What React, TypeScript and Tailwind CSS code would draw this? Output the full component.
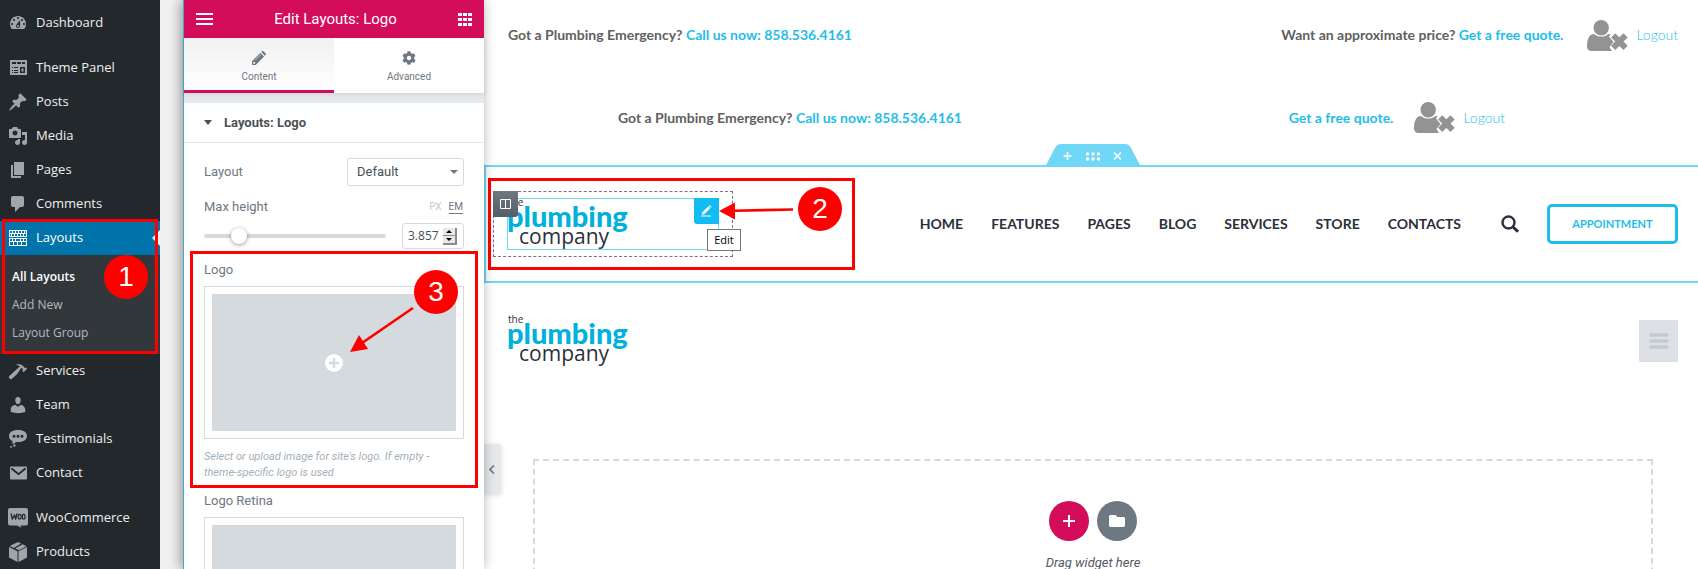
import type { ReactNode } from "react";
import { FaCog, FaFolder } from "react-icons/fa";

const dash = {
  dashboard:
    "M3.76 16h12.48c1.1-1.37 1.76-3.11 1.76-5 0-4.42-3.58-8-8-8s-8 3.58-8 8c0 1.89.66 3.63 1.76 5zM10 4c.55 0 1 .45 1 1s-.45 1-1 1-1-.45-1-1 .45-1 1-1zM6 6c.55 0 1 .45 1 1s-.45 1-1 1-1-.45-1-1 .45-1 1-1zm8 0c.55 0 1 .45 1 1s-.45 1-1 1-1-.45-1-1 .45-1 1-1zm-5.37 5.55L12 7v6c0 1.1-.9 2-2 2s-2-.9-2-2c0-.57.24-1.08.63-1.45zM4 10c.55 0 1 .45 1 1s-.45 1-1 1-1-.45-1-1 .45-1 1-1zm12 0c.55 0 1 .45 1 1s-.45 1-1 1-1-.45-1-1 .45-1 1-1zm-5 3c0-.55-.45-1-1-1s-1 .45-1 1 .45 1 1 1 1-.45 1-1z",
  theme: "M2 2h17v15H2zM4 4v2h4V4zM9 4v2h4V4zM14 4v2h3V4zM4 9v1h1V9zM6 9v1h4V9zM4 12v1h1v-1zM6 12v1h4v-1zM4 14v1h1v-1zM6 14v1h4v-1zM12 9v6h5V9zM13.500 10.500h2v3h-2z",
  posts:
    "M10.44 3.02l1.82-1.82 6.36 6.35-1.83 1.82c-1.05-.68-2.48-.57-3.41.36l-.75.75c-.92.93-1.04 2.35-.35 3.41l-1.83 1.82-2.41-2.41-2.8 2.79c-.42.42-3.38 2.71-3.8 2.29s1.86-3.39 2.28-3.81l2.79-2.79L4.1 9.36l1.83-1.82c1.05.69 2.48.57 3.4-.36l.75-.75c.93-.92 1.05-2.35.36-3.41z",
  media:
    "M13 11V4c0-.55-.45-1-1-1h-1.67L9 1H5L3.67 3H2c-.55 0-1 .45-1 1v7c0 .55.45 1 1 1h10c.55 0 1-.45 1-1zM7 4.5c1.38 0 2.5 1.12 2.5 2.5S8.38 9.5 7 9.5 4.5 8.38 4.5 7 5.62 4.5 7 4.5zM14 6h5v10.5c0 1.38-1.12 2.5-2.5 2.5S14 17.88 14 16.5s1.12-2.5 2.5-2.5c.17 0 .34.02.5.05V9h-3V6zm-4 8.05V13h2v3.5c0 1.38-1.12 2.5-2.5 2.5S7 17.88 7 16.5 8.12 14 9.5 14c.17 0 .34.02.5.05z",
  pages: "M6 15V2h10v13H6zm-1 1h8v2H3V5h2v11z",
  comments:
    "M5 2h9c1.1 0 2 .9 2 2v7c0 1.1-.9 2-2 2h-2l-5 5v-5H5c-1.1 0-2-.9-2-2V4c0-1.1.9-2 2-2z",
  layouts:
    "M1 2h18v7H1zM2 3v2h16V3zM2 6v2h16V6zM1 10h18v8H1zM2 11v2h16v-2zM2 14v3h16v-3zM4 3h1v2H4zM7 3h1v2H7zM10 3h1v2h-1zM13 3h1v2h-1zM16 3h1v2h-1zM3 6h1v2H3zM6 6h1v2H6zM9 6h1v2H9zM12 6h1v2h-1zM15 6h1v2h-1zM4 11h1v2H4zM7 11h1v2H7zM12 11h1v2h-1zM15 11h1v2h-1zM5 14h1v3H5zM9 14h1v3H9zM13 14h1v3h-1z",
  services:
    "M17.7 6.32l1.41 1.42-3.47 3.41-1.42-1.42.84-.82c-.32-.76-.81-1.57-1.51-2.31l-4.61 6.59-5.26 4.7c-.39.39-1.02.39-1.42 0l-1.2-1.21c-.39-.39-.39-1.02 0-1.41l10.97-9.92c-1.37-.86-3.21-1.46-5.67-1.48 2.7-.82 4.95-.93 6.58-.3 1.7.66 2.82 2.2 3.91 3.58z",
  team: "M10 9.25c-2.270 0-2.730-3.440-2.730-3.440C7 4.020 7.820 2 9.970 2c2.160 0 2.980 2.020 2.710 3.810 0 0-.41 3.440-2.680 3.440zm0 2.570L12.720 10c2.390 0 4.520 2.330 4.520 4.530v2.490s-3.650 1.130-7.240 1.130c-3.650 0-7.240-1.130-7.240-1.130v-2.490c0-2.250 1.940-4.480 4.470-4.480z",
  testimonials:
    "M10 1h.5c5 0 8.500 2.200 8.500 6s-3.500 6-8.500 6H9.500c-.6 0-1.100 0-1.600-.1C7 14.300 5.300 15 4 14.600c.6-.8.700-1.500.5-2.400C2.300 11.200 1 9.300 1 7c0-3.800 3.500-6 9-6zM6 5.700a1.500 1.500 0 100 3 1.500 1.500 0 000-3zM10 5.700a1.500 1.500 0 100 3 1.500 1.500 0 000-3zM14 5.700a1.500 1.500 0 100 3 1.500 1.500 0 000-3zM5.800 15.400a1.200 1.200 0 110 2.200 1.200 1.200 0 010-2.200zM3 17a.9.900 0 110 1.800.9.900 0 010-1.800z",
  contact: "M3 3.500h15a1 1 0 011 1v11a1 1 0 01-1 1H3a1 1 0 01-1-1v-11a1 1 0 011-1zM3.200 5v1.500l7.300 5.700 7.300-5.700V5h-1.300l-6 4.900L4.500 5z",
  products:
    "M10 0l3.200 1.600-7.500 4.300-3.900-2zM14.600 2.300L18.500 4.200 11 8.300 7.200 6.600zM1 5l8.500 4.200V20L1 15.500zM19 5v10.500L10.500 20V9.200z",
};

function Glyph({ d }: { d: string }) {
  return (
    <svg viewBox="0 0 20 20" className="size-5 shrink-0" fill="currentColor" fillRule="evenodd" aria-hidden="true">
      <path d={d} />
    </svg>
  );
}

function WooGlyph() {
  return (
    <svg viewBox="0 0 20 20" className="size-5 shrink-0 overflow-visible" aria-hidden="true">
      <path d="M2 0h16a2 2 0 012 2v13.500a2 2 0 01-2 2h-5.500l.7 2.200-4-2.200H2a2 2 0 01-2-2V2a2 2 0 012-2z" fill="#a0a5aa" />
      <path
        d="M3.200 6l1.100 5.200L6.500 7l1.200 4.200L9 6"
        fill="none"
        stroke="#23282d"
        strokeWidth="1.300"
        strokeLinejoin="round"
        strokeLinecap="round"
      />
      <ellipse cx="11.700" cy="8.700" rx="1.500" ry="2.300" fill="none" stroke="#23282d" strokeWidth="1.200" />
      <ellipse cx="15.700" cy="8.700" rx="1.400" ry="2.300" fill="none" stroke="#23282d" strokeWidth="1.200" />
    </svg>
  );
}

function MenuItem({ label, icon }: { label: string; icon: ReactNode }) {
  return (
    <li>
      <a href="#" className="flex h-[34px] items-center gap-2 pl-2 text-[13px] text-[#eeeeee]">
        <span className="text-[#a0a5aa]">{icon}</span>
        {label}
      </a>
    </li>
  );
}

function Step({ n, className }: { n: number; className: string }) {
  return (
    <span
      className={`absolute z-20 flex size-11 items-center justify-center rounded-full bg-[#ff0000] font-['Liberation_Sans',sans-serif] text-[28px] leading-none text-white ${className}`}
    >
      {n}
    </span>
  );
}

function Sidebar() {
  return (
    <nav className="relative z-10 w-40 shrink-0 bg-[#23282d] pt-[6px] font-['Open_Sans',sans-serif]">
      <ul>
        <MenuItem label="Dashboard" icon={<Glyph d={dash.dashboard} />} />
      </ul>
      <ul className="mt-[11px]">
        <MenuItem label="Theme Panel" icon={<Glyph d={dash.theme} />} />
        <MenuItem label="Posts" icon={<Glyph d={dash.posts} />} />
        <MenuItem label="Media" icon={<Glyph d={dash.media} />} />
        <MenuItem label="Pages" icon={<Glyph d={dash.pages} />} />
        <MenuItem label="Comments" icon={<Glyph d={dash.comments} />} />
        <li className="relative">
          <a href="#" className="relative flex h-[34px] items-center gap-2 bg-[#0073aa] pl-2 text-[13px] text-white">
            <Glyph d={dash.layouts} />
            Layouts
            <span className="absolute top-[9px] right-0 border-y-8 border-r-8 border-y-transparent border-r-[#f1f1f1]" />
          </a>
          <ul className="bg-[#32373c] pt-2 pb-[7px] text-xs text-[#b4b9be]">
            <li>
              <a href="#" className="flex h-7 items-center pl-3 font-semibold text-white">
                All Layouts
              </a>
            </li>
            <li>
              <a href="#" className="flex h-7 items-center pl-3">
                Add New
              </a>
            </li>
            <li>
              <a href="#" className="flex h-7 items-center pl-3">
                Layout Group
              </a>
            </li>
          </ul>
          <span className="absolute -top-[2px] right-[2px] bottom-0 left-[2px] border-3 border-[#ff0000]" />
          <Step n={1} className="top-[34px] right-3" />
        </li>
        <MenuItem label="Services" icon={<Glyph d={dash.services} />} />
        <MenuItem label="Team" icon={<Glyph d={dash.team} />} />
        <MenuItem label="Testimonials" icon={<Glyph d={dash.testimonials} />} />
        <MenuItem label="Contact" icon={<Glyph d={dash.contact} />} />
      </ul>
      <ul className="mt-[11px]">
        <MenuItem label="WooCommerce" icon={<WooGlyph />} />
        <MenuItem label="Products" icon={<Glyph d={dash.products} />} />
      </ul>
    </nav>
  );
}

function MediaPicker({ label }: { label: string }) {
  return (
    <button
      type="button"
      aria-label={label}
      className="flex h-[153px] w-full border border-[#d5dadf] bg-white p-[7px]"
    >
      <span className="flex flex-1 items-center justify-center self-stretch bg-[#d5dadf]">
        <svg viewBox="0 0 18 18" className="size-[18px]" aria-hidden="true">
          <circle cx="9" cy="9" r="9" fill="#fff" />
          <path d="M9 4v10M4 9h10" stroke="#d5dadf" strokeWidth="2.400" />
        </svg>
      </span>
    </button>
  );
}

function Panel() {
  return (
    <section className="relative z-[5] flex w-[301px] shrink-0 flex-col border-l border-[#4aa3d0] bg-white font-['Roboto',sans-serif] text-[#6d7882] shadow-[-2px_0_12px_rgba(0,0,0,0.4)]">
      <header className="flex h-[38px] shrink-0 items-center justify-between bg-[#d30c5c] px-3 text-white">
        <button type="button" aria-label="Menu">
          <svg viewBox="0 0 17 12" className="h-3 w-[17px]" aria-hidden="true">
            <path d="M0 1h17M0 6h17M0 11h17" stroke="#fff" strokeWidth="2" />
          </svg>
        </button>
        <h1 className="text-[15px]">Edit Layouts: Logo</h1>
        <button type="button" aria-label="Widgets">
          <svg viewBox="0 0 14 13" className="h-[13px] w-[14px]" fill="#fff" aria-hidden="true">
            <path d="M0 0h4v3H0zM5 0h4v3H5zM10 0h4v3h-4zM0 5h4v3H0zM5 5h4v3H5zM10 5h4v3h-4zM0 10h4v3H0zM5 10h4v3H5zM10 10h4v3h-4z" />
          </svg>
        </button>
      </header>

      <div className="relative z-[1] flex h-[55px] shrink-0 text-[10px] shadow-[0_1px_5px_rgba(0,0,0,0.1)]">
        <button
          type="button"
          className="flex flex-1 flex-col items-center gap-1 border-b-3 border-[#d30c5c] bg-linear-to-b from-[#f1f1f1] to-white pt-[13px]"
        >
          <svg viewBox="0 0 14 14" className="size-[14px]" fill="currentColor" fillRule="evenodd" aria-hidden="true">
            <path d="M0 10.300L8.400 1.900l3.700 3.700L3.700 14H0zM1.200 11.300v1.500h1.500l.8-.8-1.500-1.500zM8.300 3.700l-5.200 5.200.4.400 5.200-5.200zM9.200 1.100l.8-.8q.8-.6 1.500 0l2.200 2.200q.6.800 0 1.500l-.8.8z" />
          </svg>
          <span className="leading-4">Content</span>
        </button>
        <button type="button" className="flex flex-1 flex-col items-center gap-1 bg-white pt-[13px]">
          <FaCog size={14} />
          <span className="leading-4">Advanced</span>
        </button>
      </div>

      <div className="h-[10px] shrink-0 bg-[#e6e9ec]" />

      <h2 className="flex h-10 shrink-0 items-center gap-3 border-b border-[#e6e9ec] pl-5 text-[13px] font-bold text-[#495157]">
        <svg viewBox="0 0 8 5" className="h-[5px] w-2" fill="currentColor" aria-hidden="true">
          <path d="M0 0h8L4 5z" />
        </svg>
        Layouts: Logo
      </h2>

      <div className="flex flex-col px-5 pt-[15px] text-[13px] leading-5">
        <div className="flex h-7 items-center justify-between">
          <label htmlFor="layout">Layout</label>
          <div className="relative">
            <select
              id="layout"
              className="h-7 w-[117px] appearance-none rounded-[3px] border border-[#d5dadf] bg-white pl-[9px] text-[13px] text-[#495157]"
            >
              <option>Default</option>
            </select>
            <svg viewBox="0 0 8 4" className="pointer-events-none absolute top-3 right-[6px] h-1 w-2" fill="#6d7882" aria-hidden="true">
              <path d="M0 0h8L4 4z" />
            </svg>
          </div>
        </div>

        <div className="mt-[11px] flex items-center justify-between">
          <label htmlFor="max-height">Max height</label>
          <span className="flex gap-[7px] pr-px text-[10px] leading-3">
            <button type="button" className="text-[#c2cbd2]">
              PX
            </button>
            <button type="button" className="border-b border-[#6d7882]">
              EM
            </button>
          </span>
        </div>
        <div className="mt-[6px] flex items-center justify-between">
          <input
            type="range"
            aria-label="Max height slider"
            min={0}
            max={20}
            defaultValue={3.2}
            step={0.1}
            className="h-1 w-[182px] appearance-none rounded-full bg-[#d5dadf] [&::-webkit-slider-thumb]:size-4 [&::-webkit-slider-thumb]:appearance-none [&::-webkit-slider-thumb]:rounded-full [&::-webkit-slider-thumb]:bg-white [&::-webkit-slider-thumb]:shadow-[0_1px_4px_rgba(0,0,0,0.4)]"
          />
          <div className="flex h-[26px] w-[62px] items-center justify-between rounded-[3px] border border-[#d5dadf] pr-[6px] pl-[5px]">
            <input
              id="max-height"
              type="text"
              inputMode="decimal"
              defaultValue="3.857"
              className="w-[34px] font-['Open_Sans',sans-serif] text-xs text-[#495157]"
            />
            <span className="flex w-[14px] flex-col border-r-2 border-b-2 border-[#8c8c8c] bg-[#e8e8e8] text-black">
              <button type="button" aria-label="Increase" className="flex h-[7px] items-center justify-center">
                <svg viewBox="0 0 6 3" className="h-[3px] w-[6px]" fill="currentColor">
                  <path d="M3 0l3 3H0z" />
                </svg>
              </button>
              <button type="button" aria-label="Decrease" className="flex h-2 items-center justify-center border-t border-[#8c8c8c]">
                <svg viewBox="0 0 6 3" className="h-[3px] w-[6px]" fill="currentColor">
                  <path d="M0 0h6L3 3z" />
                </svg>
              </button>
            </span>
          </div>
        </div>

        <div className="relative mt-[11px]">
          <p>Logo</p>
          <div className="mt-[6px]">
            <MediaPicker label="Choose logo image" />
          </div>
          <p className="mt-[10px] text-[11px] leading-4 text-[#a4afb7] italic">
            Select or upload image for site's logo. If empty - theme-specific logo is used
          </p>
          <span className="absolute -inset-x-[14px] -top-[9px] -bottom-[7px] border-3 border-[#ff0000]" />
          <svg viewBox="0 0 64 46" className="absolute top-[47px] left-[146px] h-[46px] w-16" aria-hidden="true">
            <path d="M63 1L12 36" stroke="#ff0000" strokeWidth="2.600" />
            <path d="M0 45l9-17 9 14z" fill="#ff0000" />
          </svg>
          <Step n={3} className="top-[10px] right-[6px]" />
        </div>

        <p className="mt-[10px]">Logo Retina</p>
        <div className="mt-[6px]">
          <MediaPicker label="Choose retina logo image" />
        </div>
      </div>
    </section>
  );
}

function BrandLogo() {
  return (
    <svg viewBox="0 0 118 52" className="h-[52px] w-[118px] overflow-visible" role="img" aria-label="the plumbing company">
      <text x="0" y="8" fill="#2b2f3a" className="font-['Open_Sans',sans-serif] text-[10px]">
        the
      </text>
      <text x="-1" y="29" fill="#00b1dc" className="font-['Lato',sans-serif] text-[29px] font-black">
        plumbing
      </text>
      <text x="11" y="46" fill="#2b2f3a" className="font-['Open_Sans',sans-serif] text-[21px]">
        company
      </text>
    </svg>
  );
}

function Account() {
  return (
    <a href="#" className="flex items-center gap-2 font-light">
      <svg viewBox="0 0 41 31" className="h-[31px] w-[41px]" fill="#939393" aria-hidden="true">
        <circle cx="14.200" cy="7.700" r="7.700" />
        <path d="M7 14c2 1.700 4.500 2.600 7.200 2.600S19.500 15.700 21.400 14c.9 0 1.700.2 2.400.5L22 16.500l4.500 5.500-4 5 2.500 4H4.500C1.700 31 0 29.200 0 26.500 0 19.500 2 14 7 14z" />
        <path d="M28.300 13.300l4 4 4.200-4 4.200 4.100-4.200 4.200 4.200 4.200-4.200 4.200-4.200-4-4 4-4.200-4.200 4.100-4.200-4.100-4.200z" />
      </svg>
      Logout
    </a>
  );
}

function Phone() {
  return (
    <p>
      Got a Plumbing Emergency?{" "}
      <a href="#" className="text-[#1fbde9]">
        Call us now: 858.536.4161
      </a>
    </p>
  );
}

const links = ["HOME", "FEATURES", "PAGES", "BLOG", "SERVICES", "STORE", "CONTACTS"];

function Canvas() {
  return (
    <main className="relative -mr-1 flex min-w-0 flex-1 flex-col bg-white font-['Lato',sans-serif]">
      <div className="flex h-[70px] shrink-0 items-center justify-between px-6 text-sm font-bold text-[#606060]">
        <Phone />
        <div className="flex items-center gap-6 text-[#1fbde9]">
          <p className="text-[#606060]">
            Want an approximate price?{" "}
            <a href="#" className="text-[#1fbde9]">
              Get a free quote.
            </a>
          </p>
          <Account />
        </div>
      </div>
      <div className="flex h-[95px] shrink-0 items-center justify-between pr-[197px] pl-[134px] text-sm font-bold text-[#606060]">
        <Phone />
        <div className="flex items-center gap-[21px] text-[#1fbde9]">
          <a href="#">Get a free quote.</a>
          <Account />
        </div>
      </div>

      <section className="relative flex h-[118px] shrink-0 items-center justify-between border-2 border-[#71d7f7] pr-[22px] pl-[7px]">
        <div className="absolute bottom-full left-1/2 -translate-x-1/2">
          <svg viewBox="0 0 96 23" className="h-[23px] w-24" aria-hidden="true">
            <path d="M0 23L10.500 3Q12.500 0 16 0H80Q83.500 0 85.500 3L96 23z" fill="#71d7f7" />
            <path d="M18.500 12h8M22.500 8v8M69 8.500l7 7M76 8.500l-7 7" stroke="#fff" strokeWidth="1.600" />
            <g fill="#fff">
              <circle cx="42.500" cy="10" r="1.700" />
              <circle cx="48" cy="10" r="1.700" />
              <circle cx="53.500" cy="10" r="1.700" />
              <circle cx="42.500" cy="15" r="1.700" />
              <circle cx="48" cy="15" r="1.700" />
              <circle cx="53.500" cy="15" r="1.700" />
            </g>
          </svg>
        </div>

        <div className="relative flex h-[66px] w-60 items-center border border-dashed border-[#6d7882] pl-[13px]">
          <div className="relative flex h-[52px] w-[212px] items-center border border-[#71d7f7]">
            <BrandLogo />
            <button
              type="button"
              aria-label="Edit logo"
              className="absolute -top-px -right-px flex h-[26px] w-[25px] items-center justify-center rounded-bl-[3px] bg-[#10bcf2]"
            >
              <svg viewBox="0 0 11 12" className="h-3 w-[11px]" aria-hidden="true">
                <path d="M1 7.600L7.300 1.300 9.300 3.300 3 9.600H1zM7.800.8L8.600 0l2 2-.8.8z" fill="#fff" />
                <path d="M0 11h10" stroke="#fff" strokeWidth="1" />
              </svg>
            </button>
          </div>
          <button
            type="button"
            aria-label="Edit column"
            className="absolute -top-px -left-px flex h-[26px] w-[25px] items-center justify-center rounded-br-[3px] bg-linear-to-b from-[#6d7882] to-[#555d66]"
          >
            <svg viewBox="0 0 11 10" className="h-[10px] w-[11px]" aria-hidden="true">
              <path d="M.5.5h10v9H.5zM5.500.5v9" fill="none" stroke="#fff" />
            </svg>
          </button>
          <span className="absolute top-[37px] -right-[9px] flex h-[22px] w-[34px] items-center justify-center border border-[#767676] bg-white font-['Open_Sans',sans-serif] text-[11px] text-black">
            Edit
          </span>
        </div>

        <span className="absolute top-[11px] left-[2px] h-[92px] w-[367px] border-3 border-[#ff0000]" />
        <svg viewBox="0 0 74 18" className="absolute top-[35px] left-[233px] h-[18px] w-[74px]" aria-hidden="true">
          <path d="M74 7.500L14 8.800" stroke="#ff0000" strokeWidth="2.600" />
          <path d="M0 9l16-8.500v17z" fill="#ff0000" />
        </svg>
        <Step n={2} className="top-5 left-[312px]" />

        <div className="flex items-center gap-7">
          <ul className="flex gap-7 text-sm font-bold text-[#2b2f3a]">
            {links.map((l) => (
              <li key={l}>
                <a href="#">{l}</a>
              </li>
            ))}
          </ul>
          <button type="button" aria-label="Search" className="ml-3">
            <svg viewBox="0 0 18 18" className="size-[18px]" fill="none" stroke="#2b2f3a" aria-hidden="true">
              <circle cx="7.500" cy="7.500" r="6" strokeWidth="2.400" />
              <path d="M12 12l5 4.700" strokeWidth="3" />
            </svg>
          </button>
          <a
            href="#"
            className="flex h-10 w-[131px] items-center justify-center rounded-[5px] border-3 border-[#1ebeea] text-[11px] font-bold text-[#1ebeea]"
          >
            APPOINTMENT
          </a>
        </div>
      </section>

      <div className="flex h-[116px] shrink-0 items-center justify-between px-6">
        <BrandLogo />
        <button type="button" aria-label="Open menu" className="flex h-[42px] w-[39px] items-center justify-center bg-[#dde1e6]">
          <svg viewBox="0 0 20 16" className="h-4 w-5" stroke="#c2cbd2" strokeWidth="3.400" strokeLinecap="round" aria-hidden="true">
            <path d="M2 2h16M2 8h16M2 14h16" />
          </svg>
        </button>
      </div>

      <div className="mx-[49px] mt-[60px] flex h-[154px] shrink-0 flex-col items-center border-2 border-dashed border-[#d5dadf] pt-10 font-['Roboto',sans-serif]">
        <div className="flex gap-2">
          <button type="button" aria-label="Add section" className="flex size-10 items-center justify-center rounded-full bg-[#d30c5c]">
            <svg viewBox="0 0 12 12" className="size-3" aria-hidden="true">
              <path d="M6 0v12M0 6h12" stroke="#fff" strokeWidth="2" />
            </svg>
          </button>
          <button type="button" aria-label="Add template" className="flex size-10 items-center justify-center rounded-full bg-[#6d7882] text-white">
            <FaFolder size={16} />
          </button>
        </div>
        <p className="mt-3 text-[13px] leading-5 text-[#54595f] italic">Drag widget here</p>
      </div>

      <button
        type="button"
        aria-label="Collapse panel"
        className="absolute top-[444px] left-0 flex h-[50px] w-4 items-center justify-center bg-[#e6e9ec] shadow-[1px_1px_5px_rgba(0,0,0,0.15)]"
      >
        <svg viewBox="0 0 6 9" className="h-[9px] w-[6px]" fill="none" stroke="#6d7882" strokeWidth="1.600" aria-hidden="true">
          <path d="M5 .5l-4 4 4 4" />
        </svg>
      </button>
    </main>
  );
}

export default function App() {
  return (
    <div className="flex h-screen overflow-hidden bg-[#f1f1f1]">
      <Sidebar />
      <div className="w-[23px] shrink-0" />
      <Panel />
      <Canvas />
    </div>
  );
}
